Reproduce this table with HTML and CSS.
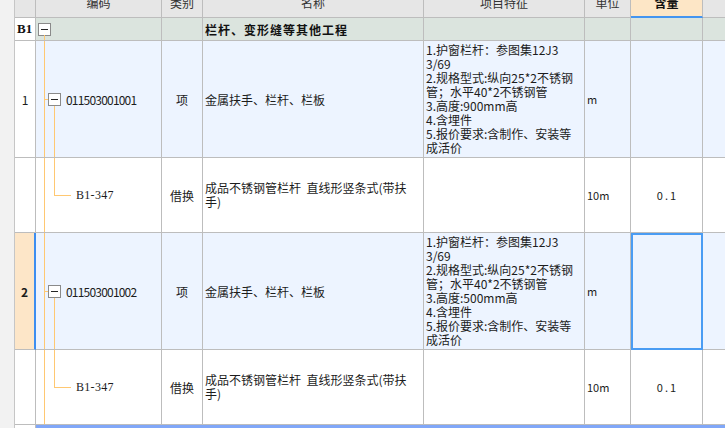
FILE: index.html
```html
<!DOCTYPE html>
<html lang="zh-CN">
<head>
<meta charset="utf-8">
<title>清单</title>
<link rel="stylesheet" href="styles.css">
</head>
<body>
<div class="sheet">
  <div class="strip"></div>

  <div class="c h"></div>
  <div class="c h"><span>编码</span></div>
  <div class="c h"><span>类别</span></div>
  <div class="c h"><span>名称</span></div>
  <div class="c h"><span>项目特征</span></div>
  <div class="c h"><span>单位</span></div>
  <div class="c h act"><span>含量</span></div>
  <div class="c h last"></div>

  <div class="c pl grp-no">B1</div>
  <div class="c g code code-top"><span class="box"></span><i class="t v-from-box"></i></div>
  <div class="c g"></div>
  <div class="c g pl grp-name">栏杆、变形缝等其他工程</div>
  <div class="c g"></div>
  <div class="c g"></div>
  <div class="c g"></div>
  <div class="c g last"></div>

  <div class="c ctr">1</div>
  <div class="c b code code-item"><i class="t v1"></i><i class="t stub"></i><i class="t v2"></i><span class="box"></span><span class="txt">011503001001</span></div>
  <div class="c b ctr">项</div>
  <div class="c b pl">金属扶手、栏杆、栏板</div>
  <div class="c b feat">1.护窗栏杆：参图集12J3<br>3/69<br>2.规格型式:纵向25*2不锈钢<br>管；水平40*2不锈钢管<br>3.高度:900mm高<br>4.含埋件<br>5.报价要求:含制作、安装等<br>成活价</div>
  <div class="c b pl small">m</div>
  <div class="c b"></div>
  <div class="c b last"></div>

  <div class="c"></div>
  <div class="c code code-sub"><i class="t v1"></i><i class="t v2u"></i><i class="t hz"></i><span class="sub-code">B1-347</span></div>
  <div class="c ctr">借换</div>
  <div class="c pl two">成品不锈钢管栏杆&nbsp;&nbsp;直线形竖条式(带扶<br>手)</div>
  <div class="c"></div>
  <div class="c pl small">10m</div>
  <div class="c ctr small qty">0.1</div>
  <div class="c last"></div>

  <div class="c ctr sel-no">2</div>
  <div class="c b code code-item"><i class="t v1"></i><i class="t stub"></i><i class="t v2"></i><span class="box"></span><span class="txt">011503001002</span></div>
  <div class="c b ctr">项</div>
  <div class="c b pl">金属扶手、栏杆、栏板</div>
  <div class="c b feat">1.护窗栏杆：参图集12J3<br>3/69<br>2.规格型式:纵向25*2不锈钢<br>管；水平40*2不锈钢管<br>3.高度:500mm高<br>4.含埋件<br>5.报价要求:含制作、安装等<br>成活价</div>
  <div class="c b pl small">m</div>
  <div class="c b sel"></div>
  <div class="c b last"></div>

  <div class="c"></div>
  <div class="c code code-sub"><i class="t v1"></i><i class="t v2u"></i><i class="t hz"></i><span class="sub-code">B1-347</span></div>
  <div class="c ctr">借换</div>
  <div class="c pl two">成品不锈钢管栏杆&nbsp;&nbsp;直线形竖条式(带扶<br>手)</div>
  <div class="c"></div>
  <div class="c pl small">10m</div>
  <div class="c ctr small qty">0.1</div>
  <div class="c last"></div>

  <div class="c"></div>
  <div class="bluebar"></div>
</div>
</body>
</html>
```

FILE: styles.css
```css
html, body {
  margin: 0;
  background: #ffffff;
}

body {
  font-family: "Noto Sans CJK SC", sans-serif;
  font-size: 12px;
  color: #1c1c1c;
}

.sheet {
  width: 725px;
  height: 428px;
  overflow: hidden;
  display: grid;
  grid-template-columns: 15px 21px 126px 41px 221px 161px 46px 72px 22px;
  grid-template-rows: 18px 23px 117px 75px 117px 75px 20px;
}

.strip {
  grid-column: 1;
  grid-row: 1 / -1;
  background: #f2f2f2;
  border-right: 1px solid #c6c6c6;
}

.c {
  box-sizing: border-box;
  border-right: 1px solid #bdbdbd;
  border-bottom: 1px solid #bdbdbd;
  display: flex;
  align-items: center;
  overflow: hidden;
  min-width: 0;
  white-space: nowrap;
}

.last {
  border-right: none;
}

.h {
  background: #e6e6e6;
  justify-content: center;
  align-items: flex-start;
  color: #333333;
}

.h span {
  line-height: 12px;
  margin-top: -3px;
}

.h.act {
  background: #fde6c6;
  border-bottom: 2px solid #4495f0;
  font-weight: bold;
  color: #111111;
}

.g {
  background: #dbe4de;
}

.b {
  background: #edf4ff;
}

.ctr {
  justify-content: center;
}

.pl {
  padding-left: 2px;
}

.grp-no {
  font-family: "Liberation Serif", serif;
  font-weight: bold;
  font-size: 13px;
  color: #111111;
}

.grp-name {
  font-weight: bold;
  letter-spacing: 1px;
  color: #111111;
}

.feat {
  line-height: 14px;
  padding-left: 2px;
}

.two {
  line-height: 14px;
}

.small {
  font-size: 11px;
}

.qty {
  letter-spacing: 2px;
  padding-left: 2px;
}

.sel-no {
  background: #fde6c8;
  border-right: 2px solid #3d8ef0;
  font-weight: bold;
}

.sel {
  outline: 2px solid #4a9cf3;
  outline-offset: -2px;
}

/* tree column */
.code {
  position: relative;
  padding-left: 12px;
}

.code-top {
  padding-left: 2px;
}

.code-sub {
  padding-left: 40px;
}

.box {
  position: relative;
  flex: none;
  width: 13px;
  height: 13px;
  box-sizing: border-box;
  border: 1px solid #8a8a8a;
  background: #ffffff;
}

.box::after {
  content: "";
  position: absolute;
  left: 2px;
  top: 5px;
  width: 7px;
  height: 1px;
  background: #262626;
}

.txt {
  margin-left: 5px;
  letter-spacing: -0.8px;
}

.sub-code {
  font-family: "Liberation Serif", serif;
  font-size: 12px;
  letter-spacing: 0.3px;
}

.t {
  position: absolute;
  background: #ffc872;
}

.v-from-box {
  left: 8px;
  top: 17px;
  bottom: 0;
  width: 1px;
}

.v1 {
  left: 8px;
  top: 0;
  bottom: 0;
  width: 1px;
}

.stub {
  left: 8px;
  top: 50%;
  width: 4px;
  height: 1px;
}

.v2 {
  left: 18px;
  top: calc(50% + 6px);
  bottom: 0;
  width: 1px;
}

.v2u {
  left: 18px;
  top: 0;
  height: 50%;
  width: 1px;
}

.hz {
  left: 18px;
  top: 50%;
  width: 17px;
  height: 1px;
}

.bluebar {
  grid-column: 3 / -1;
  background: #80a7f8;
}
```
